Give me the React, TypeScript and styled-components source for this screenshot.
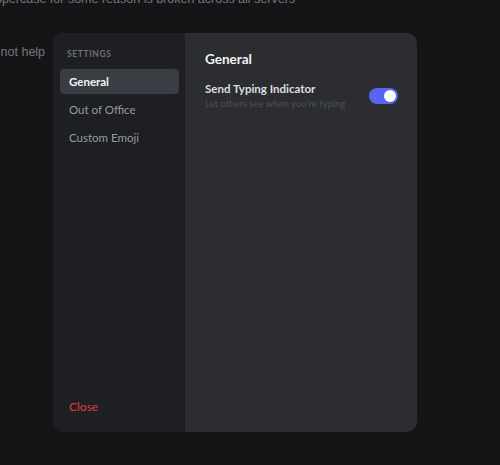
import styled, { createGlobalStyle } from 'styled-components';
import { useState } from 'react';

const GlobalStyle = createGlobalStyle`
  html, body {
    margin: 0;
    padding: 0;
    background: #151518;
    font-family: Lato, Inter, sans-serif;
    overflow: hidden;
  }
`;

const navItems = ['General', 'Out of Office', 'Custom Emoji'];

const App = () => {
  const [active, setActive] = useState('General');
  const [typing, setTyping] = useState(true);

  return (
    <Page>
      <GlobalStyle />
      <Chat>
        <ChatLine $top={-11} $left={-12}>uppercase for some reason is broken across all servers</ChatLine>
        <ChatLine $top={42} $left={-30}>does not help</ChatLine>
      </Chat>
      <Backdrop>
        <Modal>
          <Sidebar>
            <SectionLabel>Settings</SectionLabel>
            <NavList>
              {navItems.map((item) => (
                <NavItem key={item} $active={active === item} onClick={() => setActive(item)}>
                  {item}
                </NavItem>
              ))}
            </NavList>
            <CloseButton>Close</CloseButton>
          </Sidebar>
          <Content>
            <Title>General</Title>
            <SettingRow>
              <SettingText>
                <SettingName>Send Typing Indicator</SettingName>
                <SettingHint>Let others see when you're typing</SettingHint>
              </SettingText>
              <Toggle $on={typing} onClick={() => setTyping(!typing)}>
                <Knob />
              </Toggle>
            </SettingRow>
          </Content>
        </Modal>
      </Backdrop>
    </Page>
  );
};

export default App;

const Page = styled.div`
  position: relative;
  width: 500px;
  height: 465px;
  overflow: hidden;
  background: #151518;
`;

// chat messages sitting behind the dialog
const Chat = styled.div`
  position: absolute;
  inset: 0;
`;

const ChatLine = styled.div<{ $top: number; $left: number }>`
  position: absolute;
  top: ${(p) => p.$top}px;
  left: ${(p) => p.$left}px;
  font-family: 'Liberation Sans', Arial, sans-serif;
  font-size: 12.5px;
  line-height: 20px;
  color: #76777c;
  white-space: nowrap;
`;

const Backdrop = styled.div`
  position: absolute;
  inset: 0;
  display: flex;
  align-items: flex-start;
  padding: 33px 0 0 53px;
`;

const Modal = styled.div`
  display: flex;
  width: 364px;
  height: 399px;
  border-radius: 10px;
  overflow: hidden;
  background: #2b2d31;
`;

const Sidebar = styled.div`
  display: flex;
  flex-direction: column;
  width: 132px;
  padding: 15px 6px 17px 7px;
  box-sizing: border-box;
  background: #1e1f22;
`;

const SectionLabel = styled.div`
  padding: 0 7px;
  font-size: 8.5px;
  font-weight: 700;
  letter-spacing: 0.6px;
  text-transform: uppercase;
  color: #6f7178;
  line-height: 12px;
`;

const NavList = styled.div`
  display: flex;
  flex-direction: column;
  gap: 3px;
  margin-top: 9px;
  flex: 1;
`;

const NavItem = styled.div<{ $active: boolean }>`
  height: 25px;
  display: flex;
  align-items: center;
  padding: 0 9px;
  border-radius: 4px;
  font-size: 11.5px;
  color: ${(p) => (p.$active ? '#f2f3f5' : '#949ba4')};
  background: ${(p) => (p.$active ? '#3b3d44' : 'transparent')};
  font-weight: ${(p) => (p.$active ? 700 : 400)};
  cursor: pointer;
`;

const CloseButton = styled.div`
  padding: 0 9px;
  font-size: 12px;
  font-weight: 400;
  color: #e0393d;
  line-height: 16px;
  cursor: pointer;
`;

const Content = styled.div`
  flex: 1;
  padding: 17px 19px 0 20px;
`;

const Title = styled.div`
  font-size: 13.5px;
  font-weight: 700;
  color: #f2f3f5;
  line-height: 18px;
`;

const SettingRow = styled.div`
  display: flex;
  align-items: center;
  justify-content: space-between;
  margin-top: 13px;
`;

const SettingText = styled.div`
  display: flex;
  flex-direction: column;
  gap: 2px;
`;

const SettingName = styled.div`
  font-size: 11.5px;
  font-weight: 700;
  color: #dbdee1;
  line-height: 15px;
`;

const SettingHint = styled.div`
  font-size: 9.5px;
  color: #4e5058;
  line-height: 12px;
`;

const Toggle = styled.div<{ $on: boolean }>`
  display: flex;
  align-items: center;
  width: 29px;
  height: 16px;
  padding: 0 2px;
  box-sizing: border-box;
  border-radius: 8px;
  background: ${(p) => (p.$on ? '#5865f2' : '#80848e')};
  justify-content: ${(p) => (p.$on ? 'flex-end' : 'flex-start')};
  cursor: pointer;
`;

const Knob = styled.div`
  width: 12px;
  height: 12px;
  border-radius: 50%;
  background: #ffffff;
`;
